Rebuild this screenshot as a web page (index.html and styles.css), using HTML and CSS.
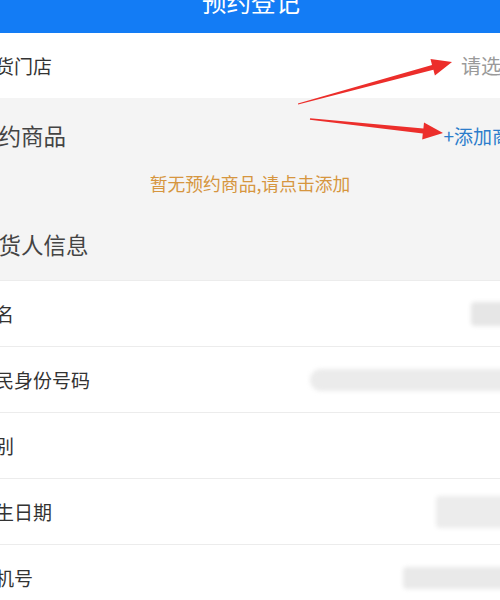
FILE: index.html
```html
<!DOCTYPE html>
<html>

<head>
  <meta charset="UTF-8">
  <title>预约登记</title>
  <link rel="stylesheet" href="styles.css">
</head>

<body>
  <div class="page">
    <div class="header">
      <h1>预约登记</h1>
    </div>

    <!-- 门店选择 -->
    <div class="row row-store">
      <span class="label">提货门店</span>
      <span class="picker">请选择</span>
    </div>

    <!-- 商品 + 提货人 -->
    <div class="section">
      <div class="section-head">
        <span class="section-title">预约商品</span>
        <span class="add-link">+添加商品</span>
      </div>
      <div class="empty-tip">暂无预约商品,请点击添加</div>
      <div class="section-head section-head-person">
        <span class="section-title">提货人信息</span>
      </div>
    </div>

    <div class="form-list">
      <div class="row">
        <span class="label">姓名</span>
        <span class="masked masked-name"></span>
      </div>
      <div class="row">
        <span class="label">公民身份号码</span>
        <span class="masked masked-id"></span>
      </div>
      <div class="row">
        <span class="label">性别</span>
      </div>
      <div class="row">
        <span class="label">出生日期</span>
        <span class="masked masked-birth"></span>
      </div>
      <div class="row">
        <span class="label">手机号</span>
        <span class="masked masked-phone"></span>
      </div>
    </div>
  </div>

  <!-- 标注箭头 -->
  <svg class="arrows" width="500" height="600" viewBox="0 0 500 600">
    <polygon points="297.9,103.4 432.0,64.9 430.5,59.1 452,62 434.9,75.5 433.4,69.7 298.1,104.6" />
    <polygon points="310.1,118.3 423.4,128.4 424.0,122.4 443,133 422.2,139.4 422.8,133.4 309.9,119.7" />
  </svg>
</body>

</html>
```

FILE: styles.css
```css
body {
  margin: 0;
  overflow: hidden;
  background-color: #ffffff;
  font-family: "Noto Sans CJK SC", "Noto Sans", sans-serif;
  color: #333;
}

.page {
  width: 580px;
  margin-left: -44px;
}

.header {
  height: 33px;
  overflow: hidden;
  padding-left: 10px;
  background-color: #137cf5;
  text-align: center;
}

.header h1 {
  margin: -30px 0 0;
  line-height: 64px;
  font-size: 24.5px;
  font-weight: 400;
  color: #fff;
}

.row {
  display: flex;
  align-items: center;
  justify-content: space-between;
  height: 65px;
  padding: 0 20px;
  border-top: 1px solid #ececec;
  background-color: #fff;
}

.row-store {
  border-top: none;
}

.label {
  font-size: 19px;
  color: #333;
}

.picker {
  margin-right: -5px;
  font-size: 20px;
  color: #9a9a9a;
}

.section {
  background-color: #f4f4f4;
}

.section-head {
  display: flex;
  align-items: center;
  justify-content: space-between;
  height: 74px;
  padding: 0 20px;
}

.section-head-person {
  height: 72px;
}

.section-title {
  font-size: 22.5px;
  color: #444;
}

.add-link {
  margin-right: -14px;
  font-size: 19px;
  color: #2c7dcb;
}

.empty-tip {
  margin-bottom: 14px;
  padding-left: 8px;
  line-height: 22px;
  text-align: center;
  font-size: 17.8px;
  color: #d6963f;
}

/* 打码区域 */
.masked {
  display: block;
  background-color: #e6e6e6;
  border-radius: 4px;
  filter: blur(2px);
}

.masked-name {
  width: 45px;
  height: 24px;
}

.masked-id {
  width: 206px;
  height: 22px;
  background-color: #ebebeb;
  border-radius: 11px 4px 4px 11px;
}

.masked-birth {
  width: 80px;
  height: 32px;
  background-color: #ececec;
}

.masked-phone {
  width: 113px;
  height: 22px;
  background-color: #e9e9e9;
}

.arrows {
  position: absolute;
  left: 0;
  top: 0;
  pointer-events: none;
  fill: #ec2e2b;
}
```
